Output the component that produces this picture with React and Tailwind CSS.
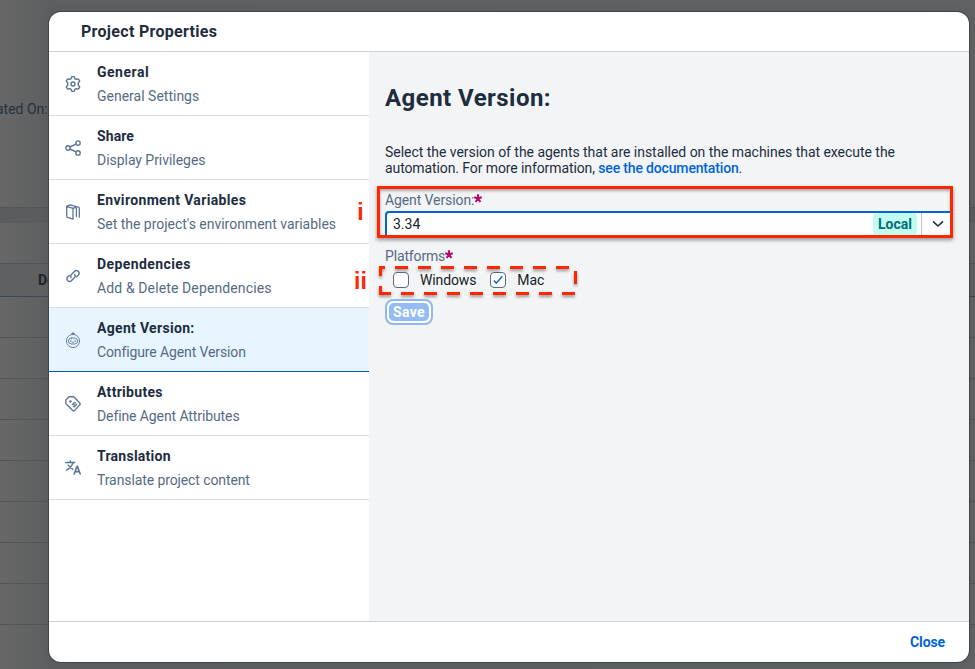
import React from "react";

const stroke = {
  fill: "none",
  stroke: "#5d7694",
  strokeWidth: 1.4,
  strokeLinejoin: "round",
  strokeLinecap: "round",
};

function Icon({ children }) {
  return (
    <svg width="16" height="16" viewBox="0 0 16 16" className="shrink-0" {...stroke}>
      {children}
    </svg>
  );
}

const icons = {
  general: (
    <Icon>
      <path d="M6.6 1.2Q6.8.6 7.3.6h1.4q.5 0 .7.6l.5 1.5 1.3.7 1.6-.4q.6-.1.9.4l.8 1.2q.3.5-.1.9L13.3 6.8v2.4l1.1 1.3q.4.4.1.9l-.8 1.2q-.3.5-.9.4l-1.6-.4-1.3.7-.5 1.5q-.2.6-.7.6H7.3q-.5 0-.7-.6l-.5-1.5-1.3-.7-1.6.4q-.6.1-.9-.4l-.8-1.2q-.3-.5.1-.9l1.1-1.3V6.8L1.600 5.500q-.4-.4-.1-.9l.8-1.2q.3-.5.9-.4l1.600.4 1.300-.7z" />
      <circle cx="8" cy="8" r="2" />
    </Icon>
  ),
  share: (
    <Icon>
      <circle cx="3" cy="8" r="2.200" />
      <circle cx="13" cy="3.100" r="2.200" />
      <circle cx="13" cy="12.900" r="2.200" />
      <path d="M5 7l6-2.900M5 9l6 2.900" />
    </Icon>
  ),
  variables: (
    <Icon>
      <g strokeWidth="1.300">
        <path d="M1.700 2.300l6.300 2.100v10.800l-5.500-1.900q-.8-.3-.8-1.100z" />
        <path d="M1.700 2.300L5.200.8l8.200 2.400q.9.300.9 1.200v8.800M8 4.400l2.600-1M11.400 4.200v8.300" />
      </g>
    </Icon>
  ),
  dependencies: (
    <Icon>
      <path d="M6.100 9.600Q5 8 6.400 6.500l3.200-3.200q1.700-1.600 3.700 0 1.700 1.800 0 3.700l-1.800 1.800M9.700 6.400q1.300 1.600-.1 3.100l-3.200 3.200q-1.900 1.600-3.700 0-1.600-1.900 0-3.700l1.600-1.600" />
    </Icon>
  ),
  agent: (
    <Icon>
      <g strokeWidth="0.900">
        <circle cx="8" cy="9" r="6.600" />
        <rect x="3.400" y="6" width="9.200" height="6" rx="3" />
        <path d="M8 2.400V.5M6.700 1.500h2.600M5.900 8.300v1.300M10.100 8.300v1.300M7.300 10.200h1.400" />
      </g>
    </Icon>
  ),
  attributes: (
    <Icon>
      <path d="M.8 6.600V4.600q0-.7.500-1.200L3.400 1.300Q3.900.8 4.600.8h3.600q.8 0 1.400.6l5.100 5.500q.9 1 0 2l-5 5.500q-1 .9-2 0L1.400 8.200q-.6-.7-.6-1.600z" />
      <circle cx="5.400" cy="5.400" r="1" fill="#5d7694" strokeWidth="0.600" />
      <path d="M9.300 6.500L7.500 8.500M11.700 8.200L9.400 10.700M8.300 10.600l.1-.1M10.500 7l.1-.1M9 8.600l1 .8" strokeWidth="1.300" />
    </Icon>
  ),
  translation: (
    <Icon>
      <path d="M.7 2.500h9.200M5.400.9v1.600M8 2.700Q6.700 7 1.400 10.200M3.200 5Q5 8 8 9.400" />
      <path d="M9.200 14l2.800-7.800h.4l2.800 7.800M10.300 11.600h3.800" strokeWidth="1.600" />
    </Icon>
  ),
};

const items = [
  { icon: "general", title: "General", sub: "General Settings", t: "tracking-[0.5px]", s: "tracking-normal" },
  { icon: "share", title: "Share", sub: "Display Privileges", t: "tracking-[0.1px]", s: "tracking-[-0.04px]" },
  { icon: "variables", title: "Environment Variables", sub: "Set the project's environment variables", t: "tracking-[0.35px]", s: "tracking-[-0.02px]" },
  { icon: "dependencies", title: "Dependencies", sub: "Add & Delete Dependencies", t: "tracking-[0.4px]", s: "tracking-[0.12px]" },
  { icon: "agent", title: "Agent Version:", sub: "Configure Agent Version", t: "tracking-[0.32px]", s: "tracking-[-0.12px]", selected: true },
  { icon: "attributes", title: "Attributes", sub: "Define Agent Attributes", t: "tracking-[0.3px]", s: "tracking-[-0.1px]" },
  { icon: "translation", title: "Translation", sub: "Translate project content", t: "tracking-[0.25px]", s: "tracking-[-0.1px]" },
];

function NavItem({ item }) {
  return (
    <li
      className={
        "flex h-16 items-center border-b pl-4 " +
        (item.selected ? "border-[#0057d2] bg-[#e6f5ff]" : "border-[#dcdddf] bg-white")
      }
    >
      {icons[item.icon]}
      <div className="ml-4 flex flex-col whitespace-nowrap text-[14px] leading-6">
        <span className={"font-bold text-[#1d2d3e] " + item.t}>{item.title}</span>
        <span className={"text-[#556b82] " + item.s}>{item.sub}</span>
      </div>
    </li>
  );
}

function Checkbox({ label, checked }) {
  return (
    <label className="flex items-center">
      <span className="flex size-4 items-center justify-center rounded-[4px] border border-[#556b82] bg-white">
        {checked && (
          <svg width="10" height="10" viewBox="0 0 10 10" fill="none" stroke="#0064d9" strokeWidth="1.4">
            <path d="M.8 5.500l2.500 2.700L9.300 1.300" />
          </svg>
        )}
      </span>
      <span className="ml-[11px] text-[14px] tracking-[-0.12px] text-[#131e29]">{label}</span>
    </label>
  );
}

function Backdrop() {
  return (
    <div className="flex h-full flex-col overflow-hidden bg-linear-to-r from-[#666766] from-0% via-[#5e5f61] via-5% to-[#616263] to-100%">
      <div className="h-[207px] whitespace-nowrap pt-[100px] text-[14px] leading-[18px] text-[#27313c]">
        <span className="-ml-[4px]">ated On:</span>
      </div>
      <div className="h-4 border-t border-[#535557] bg-[#5a5c5d]" />
      <div className="h-10" />
      <div className="h-[34px] border-y border-t-[#515355] border-b-[#3f4850] bg-[#5f6061] pl-[38px] text-[14px] font-bold leading-8 text-[#1b242d]">
        De
      </div>
      {[0, 1, 2, 3, 4, 5, 6, 7].map((row) => (
        <div key={row} className="h-[41px] shrink-0 border-b border-[#525456]" />
      ))}
    </div>
  );
}

function Star() {
  return (
    <svg width="8" height="9" viewBox="0 0 8 9" className="-mt-[4px]" stroke="#ba066c" strokeWidth="2.1" fill="none">
      <path d="M4 4.500V.2M4 4.500L.2 3.200M4 4.500l3.800-1.300M4 4.500L1.600 8M4 4.500L6.400 8" />
    </svg>
  );
}

export default function App() {
  return (
    <div className="relative h-[669px] w-[975px] overflow-hidden font-['Roboto','Liberation_Sans',sans-serif]">
      <Backdrop />
      <div className="absolute left-[49px] top-[12px] flex h-[650px] w-[920px] flex-col overflow-hidden rounded-xl bg-white shadow-[0_0_0_1px_#3c4650,0_0_8px_rgba(30,40,50,0.15)]">
        <header className="flex h-10 shrink-0 items-center border-b border-[#d0d1d3] pl-8 text-[16px] font-bold tracking-[0.3px] text-[#1d2d3e]">
          <span>Project Properties</span>
        </header>
        <div className="flex min-h-0 flex-1">
          <ul className="w-80 shrink-0 bg-white">
            {items.map((item) => (
              <NavItem key={item.icon} item={item} />
            ))}
          </ul>
          <main className="flex flex-1 flex-col bg-[#f3f4f6] pl-4">
            <h1 className="pt-[30px] text-[24px] font-bold leading-8 tracking-[0.45px] text-[#1d2d3e]">
              <span>Agent Version:</span>
            </h1>
            <p className="mt-[30px] whitespace-nowrap text-[14px] leading-4 tracking-[-0.035px] text-[#1d2d3e]">
              <span>Select the version of the agents that are installed on the machines that execute the</span>
              <br />
              <span className="tracking-[-0.1px]">
                automation. For more information,{" "}
                <a className="font-medium tracking-[-0.16px] text-[#0064d9]">see the documentation</a>.
              </span>
            </p>
            <div className="-ml-2 mt-[10px] h-[52px] w-[576px] overflow-hidden border-[3px] border-[#ff2600] pl-[5px] shadow-[0_2px_4px_rgba(0,0,0,0.4),inset_0_2px_3px_rgba(0,0,0,0.3)]">
              <div className="flex h-[22px] items-center text-[14px] tracking-[-0.1px] text-[#556b82]">
                <span>Agent Version:</span>
                <Star />
              </div>
              <div className="flex h-[28px] w-[570px] rounded-l-[4px] border-2 border-[#0064d9] bg-white">
                <span className="flex-1 pl-1.5 text-[14px] leading-[22px] text-[#131e29]">3.34</span>
                <div className="flex">
                  <span className="mr-1 flex h-[22px] w-11 items-center justify-center rounded-[4px] bg-[#c2fcee] text-[14px] font-bold text-[#046c7a]">
                    <span>Local</span>
                  </span>
                  <span className="flex h-[22px] w-8 items-center justify-center border-l border-[#a9c8f0]">
                    <svg width="12" height="8" viewBox="0 0 12 8" fill="none" stroke="#1d2d3e" strokeWidth="1.6" strokeLinecap="round" strokeLinejoin="round">
                      <path d="M1.500 1.800L6 6l4.500-4.200" />
                    </svg>
                  </span>
                </div>
              </div>
            </div>
            <div className="mt-[10px] flex h-4 items-center text-[14px] tracking-[-0.15px] text-[#556b82]">
              <span>Platforms</span>
              <Star />
            </div>
            <div className="relative -ml-2 mt-[2px] flex h-[29px] w-[200px] items-center pb-px pl-4">
              <Checkbox label="Windows" />
              <div className="ml-[14px]">
                <Checkbox label="Mac" checked />
              </div>
              <svg
                width="212"
                height="42"
                viewBox="374 262 212 42"
                className="absolute -left-[3px] -top-1 [filter:drop-shadow(0_2px_1.5px_rgba(0,0,0,0.4))]"
                fill="none"
                stroke="#ff2600"
                strokeWidth="3"
              >
                <path d="M395 267.500H575.500V293.500H380.500" strokeDasharray="13 10" />
                <path d="M380.500 276V267.500H385M380.500 286V295" />
              </svg>
            </div>
            <button className="mt-1 flex h-[26px] w-12 items-center justify-center rounded-lg border-2 border-[#8fb9f3] bg-white p-[2px]">
              <span className="flex h-full w-full items-center justify-center rounded-[5px] bg-[#94bcf3] text-[14px] font-bold tracking-[0.3px] text-white">
                <span>Save</span>
              </span>
            </button>
          </main>
        </div>
        <footer className="flex h-[41px] shrink-0 items-center justify-end border-t border-[#d0d1d3] pr-6 text-[14px] font-bold tracking-[-0.1px] text-[#0064d9]">
          <span>Close</span>
        </footer>
      </div>
      <div className="pointer-events-none absolute left-[354px] top-[199px] flex w-[13px] flex-col items-center text-[23px] font-bold leading-[26px] text-[#ff2600] font-['Liberation_Sans',sans-serif]">
        <span>i</span>
        <span className="mt-[43px]">ii</span>
      </div>
    </div>
  );
}
